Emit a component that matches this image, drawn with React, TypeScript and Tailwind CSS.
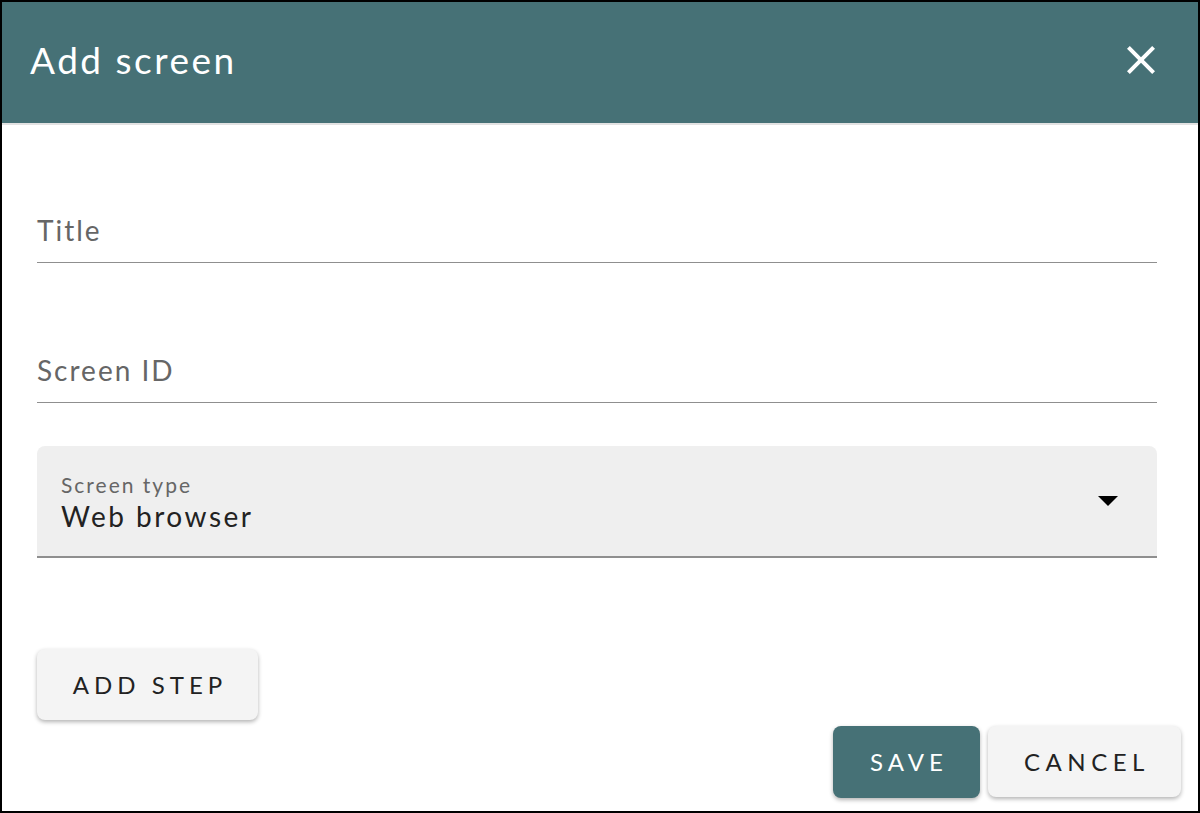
import React from 'react';

const CloseIcon = () => (
  <svg width="48" height="48" viewBox="0 0 24 24" fill="white">
    <path d="M19 6.41 17.59 5 12 10.59 6.41 5 5 6.41 10.59 12 5 17.59 6.41 19 12 13.41 17.59 19 19 17.59 13.41 12z" />
  </svg>
);

const TextField = ({ label, className }: { label: string; className: string }) => (
  <div className={`h-[63px] pt-[15px] border-b-[1.5px] border-[#8f8f8f] ${className}`}>
    <div className="text-[28px] leading-[30px] tracking-[2px] text-[#666]">{label}</div>
  </div>
);

const App: React.FC = () => {
  return (
    <div
      className="w-[1200px] h-[813px] border-2 border-black bg-white flex flex-col overflow-hidden"
      style={{ fontFamily: 'Lato, "Open Sans", sans-serif' }}
    >
      <div className="h-[121px] shrink-0 bg-[#467176] flex items-center justify-between pl-[28px] pr-[33px] pb-[5px] shadow-[0_2px_0_0_#e2e2e2] relative z-10">
        <h1 className="text-[37px] tracking-[2.5px] text-white font-normal">Add screen</h1>
        <button className="flex items-center mt-[-1px]">
          <CloseIcon />
        </button>
      </div>

      <div className="flex flex-col pl-[35px] pr-[41px]">
        <TextField label="Title" className="mt-[77px]" />
        <TextField label="Screen ID" className="mt-[77px]" />

        <div className="mt-[43px] h-[112px] bg-[#efefef] rounded-t-[8px] border-b-2 border-[#8f8f8f] flex items-center justify-between pl-[24px] pr-[39px]">
          <div className="flex flex-col pt-[4px]">
            <span className="text-[21px] leading-[26px] tracking-[2px] text-[#666]">Screen type</span>
            <span className="text-[28px] leading-[36px] tracking-[2.5px] text-[#222]">Web browser</span>
          </div>
          <svg width="20" height="10" viewBox="0 0 20 10">
            <path d="M0 0 L20 0 L10 10 Z" fill="black" />
          </svg>
        </div>

        <div className="mt-[91px]">
          <button className="w-[221px] h-[71px] rounded-[8px] bg-[#f4f4f4] text-[24px] tracking-[5px] pl-[5px] text-[#222] shadow-[0_2px_4px_rgba(0,0,0,0.3)]">
            ADD STEP
          </button>
        </div>
      </div>

      <div className="flex justify-end gap-[8px] mt-[6px] pr-[17px]">
        <button className="w-[147px] h-[72px] rounded-[8px] bg-[#467176] text-white text-[24px] tracking-[5px] pl-[5px] shadow-[0_2px_4px_rgba(0,0,0,0.3)]">
          SAVE
        </button>
        <button className="w-[193px] h-[71px] rounded-[8px] bg-[#f4f4f4] text-[#222] text-[24px] tracking-[5.5px] pl-[5px] shadow-[0_2px_4px_rgba(0,0,0,0.3)]">
          CANCEL
        </button>
      </div>
    </div>
  );
};

export default App;
